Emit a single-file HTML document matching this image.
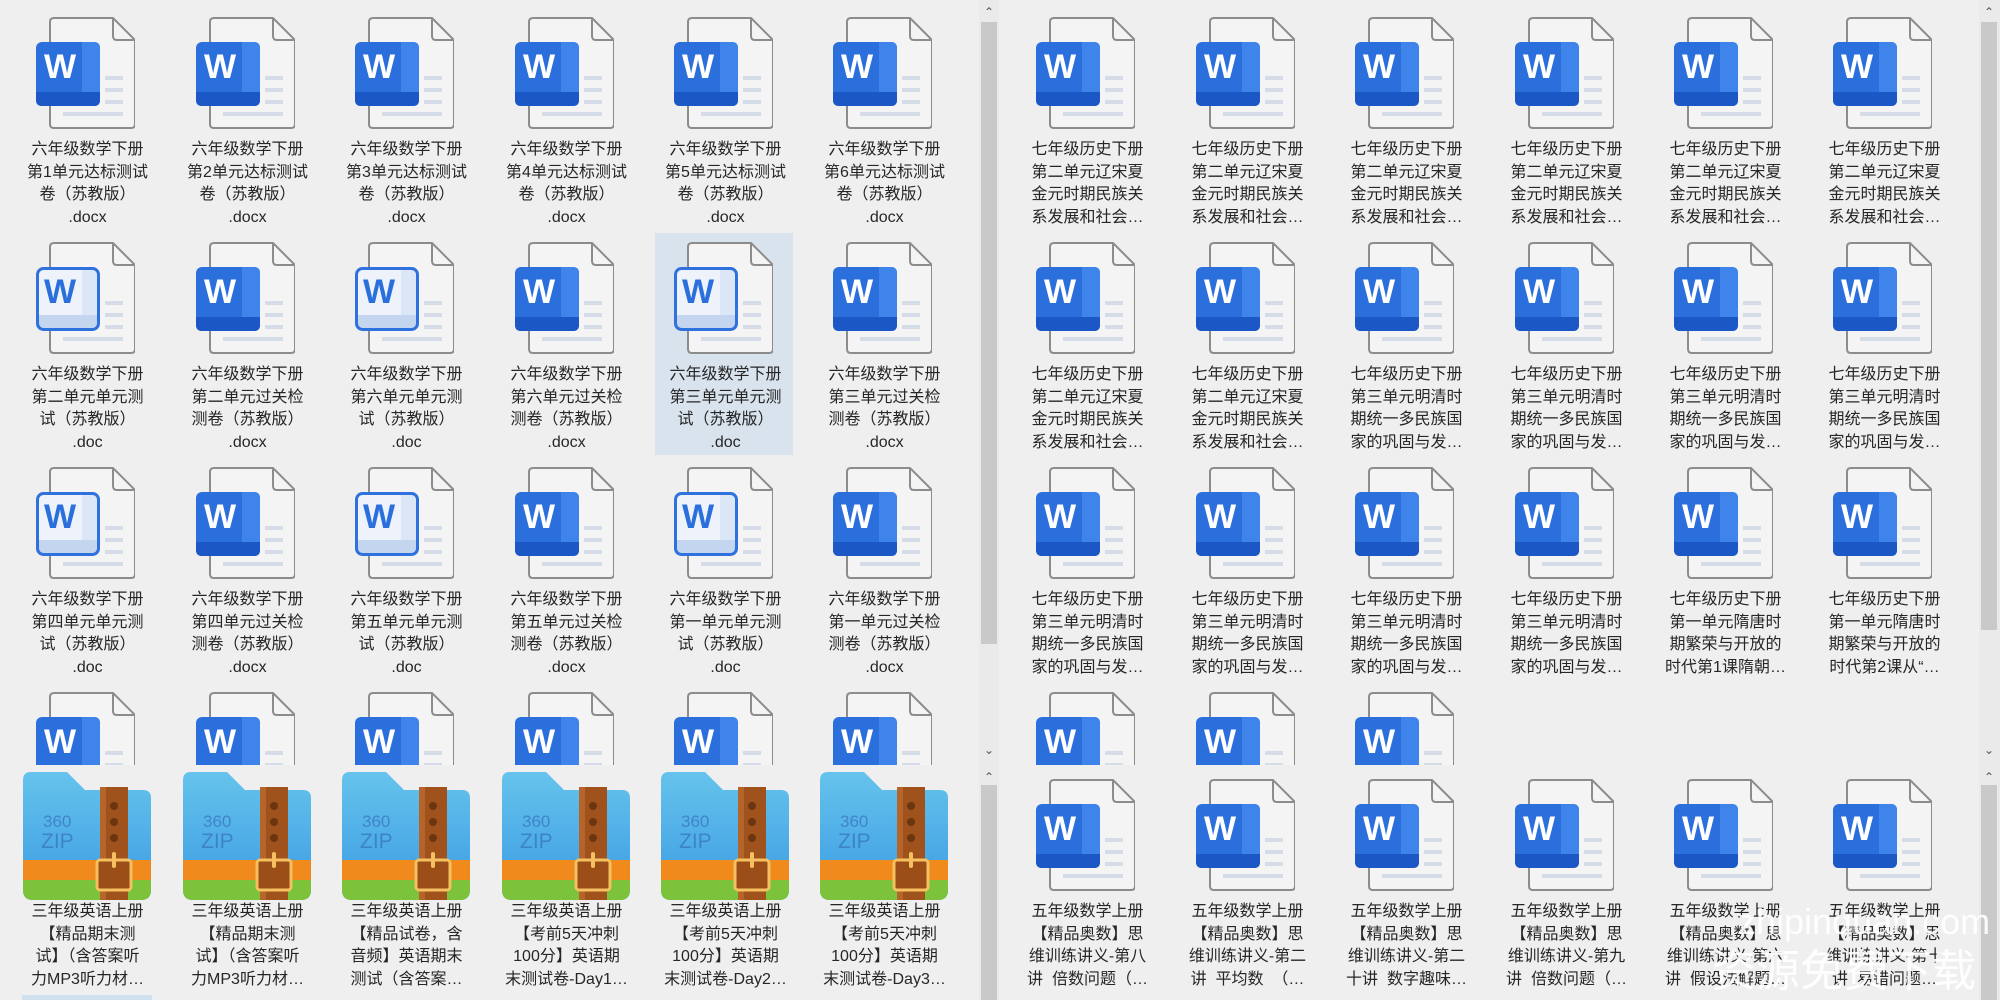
<!DOCTYPE html>
<html><head><meta charset="utf-8">
<style>
*{margin:0;padding:0;box-sizing:border-box}
body{width:2000px;height:1000px;background:#efefef;position:relative;overflow:hidden;font-family:"Liberation Sans","Noto Sans CJK SC",sans-serif}
.pane{position:absolute;overflow:hidden;background:#efefef}
.it{position:absolute;width:159px;height:225px}
.it svg{position:absolute;left:27px;top:0}
.t{position:absolute;left:10px;width:139px;top:139px;text-align:center;font-size:16px;line-height:22.5px;color:#262626;white-space:nowrap}
.sel{position:absolute;left:9px;top:8px;width:138px;height:222px;background:#d8e3ee}
.sb{position:absolute;width:20px;background:#eaeaea}
.th{position:absolute;left:2px;width:16px;background:#c9c9c9}
.ch{position:absolute;left:0;width:20px;text-align:center;font-size:12px;color:#555;line-height:12px}
.wm{position:absolute;color:rgba(255,255,255,.9);font-family:"Liberation Sans","Noto Sans CJK SC",sans-serif;white-space:nowrap}
</style></head><body>
<svg width="0" height="0" style="position:absolute">
<defs>
<linearGradient id="bg" x1="0" y1="0" x2="0" y2="1"><stop offset="0" stop-color="#66c3ec"/><stop offset="1" stop-color="#3a9be2"/></linearGradient>
<symbol id="wd" viewBox="0 0 100 130">
<path d="M15,22q0,-4 4,-4H78L100,40V124q0,4 -4,4H19q-4,0 -4,-4Z" fill="#f4f4f4" stroke="#8c8c8c" stroke-width="2"/>
<path d="M78,18V36q0,4 4,4H100" fill="none" stroke="#8c8c8c" stroke-width="2"/>
<g stroke="#d5dce7" stroke-width="4"><path d="M70,78H88M70,90H88M70,102H88M28,114H88"/></g>
<rect x="1" y="42" width="64" height="64" rx="6" fill="#2b6fdc"/>
<path d="M47,42H59q6,0 6,6V100q0,6 -6,6H47Z" fill="#3e84ea"/>
<path d="M1,92H65V100q0,6 -6,6H7q-6,0 -6,-6Z" fill="#1b58c6"/>
<text x="25" y="78" font-family="Liberation Sans" font-weight="bold" font-size="34" fill="#fff" text-anchor="middle">W</text>
</symbol>
<symbol id="wl" viewBox="0 0 100 130">
<path d="M15,22q0,-4 4,-4H78L100,40V124q0,4 -4,4H19q-4,0 -4,-4Z" fill="#f4f4f4" stroke="#8c8c8c" stroke-width="2"/>
<path d="M78,18V36q0,4 4,4H100" fill="none" stroke="#8c8c8c" stroke-width="2"/>
<g stroke="#d5dce7" stroke-width="4"><path d="M70,78H88M70,90H88M70,102H88M28,114H88"/></g>
<rect x="2.5" y="43.5" width="61" height="61" rx="6" fill="#eef3fb"/>
<path d="M47,44H58q5,0 5,5V99q0,5 -5,5H47Z" fill="#dbe6f6"/>
<path d="M3,90H63V99q0,5 -5,5H8q-5,0 -5,-5Z" fill="#c3d5ef"/>
<rect x="2.5" y="43.5" width="61" height="61" rx="6" fill="none" stroke="#2f72dd" stroke-width="3"/>
<text x="25" y="78" font-family="Liberation Sans" font-weight="bold" font-size="34" fill="#2b6fdc" text-anchor="middle">W</text>
</symbol>
<symbol id="zp" viewBox="0 0 130 140">
<path d="M0,18q0,-8 8,-8H44L62,28H120q8,0 8,8V128q0,10 -10,10H10q-10,0 -10,-10Z" fill="url(#bg)"/>
<path d="M0,98H128V118H0Z" fill="#f08a1c"/>
<path d="M0,118H128V128q0,10 -10,10H10q-10,0 -10,-10Z" fill="#7cc23a"/>
<rect x="77" y="25" width="28" height="113" fill="#a0521c"/>
<rect x="77" y="25" width="6" height="113" fill="#b5652a"/>
<circle cx="91" cy="44" r="4" fill="#6b3510"/><circle cx="91" cy="60" r="4" fill="#6b3510"/><circle cx="91" cy="76" r="4" fill="#6b3510"/>
<rect x="74" y="98" width="34" height="30" rx="3" fill="#9b4e18" stroke="#f5c060" stroke-width="3"/>
<rect x="89" y="90" width="4" height="16" rx="2" fill="#f5c060"/>
<text x="20" y="65" font-family="Liberation Sans" font-size="17" fill="#3a7ac0" opacity=".8">360</text>
<text x="18" y="86" font-family="Liberation Sans" font-size="21" fill="#3a7ac0" opacity=".8">ZIP</text>
</symbol>
</defs></svg>

<!-- LEFT UPPER -->
<div class="pane" style="left:0;top:0;width:979px;height:765px">
<div class="it" style="left:8px;top:0"><svg width="100" height="130"><use href="#wd"/></svg><div class="t">六年级数学下册<br>第1单元达标测试<br>卷（苏教版）<br>.docx</div></div>
<div class="it" style="left:168px;top:0"><svg width="100" height="130"><use href="#wd"/></svg><div class="t">六年级数学下册<br>第2单元达标测试<br>卷（苏教版）<br>.docx</div></div>
<div class="it" style="left:327px;top:0"><svg width="100" height="130"><use href="#wd"/></svg><div class="t">六年级数学下册<br>第3单元达标测试<br>卷（苏教版）<br>.docx</div></div>
<div class="it" style="left:487px;top:0"><svg width="100" height="130"><use href="#wd"/></svg><div class="t">六年级数学下册<br>第4单元达标测试<br>卷（苏教版）<br>.docx</div></div>
<div class="it" style="left:646px;top:0"><svg width="100" height="130"><use href="#wd"/></svg><div class="t">六年级数学下册<br>第5单元达标测试<br>卷（苏教版）<br>.docx</div></div>
<div class="it" style="left:805px;top:0"><svg width="100" height="130"><use href="#wd"/></svg><div class="t">六年级数学下册<br>第6单元达标测试<br>卷（苏教版）<br>.docx</div></div>

<div class="it" style="left:8px;top:225px"><svg width="100" height="130"><use href="#wl"/></svg><div class="t">六年级数学下册<br>第二单元单元测<br>试（苏教版）<br>.doc</div></div>
<div class="it" style="left:168px;top:225px"><svg width="100" height="130"><use href="#wd"/></svg><div class="t">六年级数学下册<br>第二单元过关检<br>测卷（苏教版）<br>.docx</div></div>
<div class="it" style="left:327px;top:225px"><svg width="100" height="130"><use href="#wl"/></svg><div class="t">六年级数学下册<br>第六单元单元测<br>试（苏教版）<br>.doc</div></div>
<div class="it" style="left:487px;top:225px"><svg width="100" height="130"><use href="#wd"/></svg><div class="t">六年级数学下册<br>第六单元过关检<br>测卷（苏教版）<br>.docx</div></div>
<div class="it" style="left:646px;top:225px"><div class="sel"></div><svg width="100" height="130"><use href="#wl"/></svg><div class="t">六年级数学下册<br>第三单元单元测<br>试（苏教版）<br>.doc</div></div>
<div class="it" style="left:805px;top:225px"><svg width="100" height="130"><use href="#wd"/></svg><div class="t">六年级数学下册<br>第三单元过关检<br>测卷（苏教版）<br>.docx</div></div>

<div class="it" style="left:8px;top:450px"><svg width="100" height="130"><use href="#wl"/></svg><div class="t">六年级数学下册<br>第四单元单元测<br>试（苏教版）<br>.doc</div></div>
<div class="it" style="left:168px;top:450px"><svg width="100" height="130"><use href="#wd"/></svg><div class="t">六年级数学下册<br>第四单元过关检<br>测卷（苏教版）<br>.docx</div></div>
<div class="it" style="left:327px;top:450px"><svg width="100" height="130"><use href="#wl"/></svg><div class="t">六年级数学下册<br>第五单元单元测<br>试（苏教版）<br>.doc</div></div>
<div class="it" style="left:487px;top:450px"><svg width="100" height="130"><use href="#wd"/></svg><div class="t">六年级数学下册<br>第五单元过关检<br>测卷（苏教版）<br>.docx</div></div>
<div class="it" style="left:646px;top:450px"><svg width="100" height="130"><use href="#wl"/></svg><div class="t">六年级数学下册<br>第一单元单元测<br>试（苏教版）<br>.doc</div></div>
<div class="it" style="left:805px;top:450px"><svg width="100" height="130"><use href="#wd"/></svg><div class="t">六年级数学下册<br>第一单元过关检<br>测卷（苏教版）<br>.docx</div></div>

<div class="it" style="left:8px;top:675px"><svg width="100" height="130"><use href="#wd"/></svg></div>
<div class="it" style="left:168px;top:675px"><svg width="100" height="130"><use href="#wd"/></svg></div>
<div class="it" style="left:327px;top:675px"><svg width="100" height="130"><use href="#wd"/></svg></div>
<div class="it" style="left:487px;top:675px"><svg width="100" height="130"><use href="#wd"/></svg></div>
<div class="it" style="left:646px;top:675px"><svg width="100" height="130"><use href="#wd"/></svg></div>
<div class="it" style="left:805px;top:675px"><svg width="100" height="130"><use href="#wd"/></svg></div>
</div>

<!-- LEFT LOWER -->
<div class="pane" style="left:0;top:765px;width:979px;height:235px">
<div class="it" style="left:8px;top:-3px"><svg width="130" height="140" style="left:15px;top:0"><use href="#zp"/></svg><div class="t">三年级英语上册<br>【精品期末测<br>试】（含答案听<br>力MP3听力材…</div></div>
<div class="it" style="left:168px;top:-3px"><svg width="130" height="140" style="left:15px;top:0"><use href="#zp"/></svg><div class="t">三年级英语上册<br>【精品期末测<br>试】（含答案听<br>力MP3听力材…</div></div>
<div class="it" style="left:327px;top:-3px"><svg width="130" height="140" style="left:15px;top:0"><use href="#zp"/></svg><div class="t">三年级英语上册<br>【精品试卷，含<br>音频】英语期末<br>测试（含答案…</div></div>
<div class="it" style="left:487px;top:-3px"><svg width="130" height="140" style="left:15px;top:0"><use href="#zp"/></svg><div class="t">三年级英语上册<br>【考前5天冲刺<br>100分】英语期<br>末测试卷-Day1…</div></div>
<div class="it" style="left:646px;top:-3px"><svg width="130" height="140" style="left:15px;top:0"><use href="#zp"/></svg><div class="t">三年级英语上册<br>【考前5天冲刺<br>100分】英语期<br>末测试卷-Day2…</div></div>
<div class="it" style="left:805px;top:-3px"><svg width="130" height="140" style="left:15px;top:0"><use href="#zp"/></svg><div class="t">三年级英语上册<br>【考前5天冲刺<br>100分】英语期<br>末测试卷-Day3…</div></div>
<div style="position:absolute;left:22px;top:230px;width:130px;height:10px;background:#cfe0ef"></div>
</div>

<!-- LEFT SCROLLBARS -->
<div class="sb" style="left:979px;top:0;height:765px"><div class="ch" style="top:6px">&#8963;</div><div class="th" style="top:22px;height:622px"></div><div class="ch" style="top:744px">&#8964;</div></div>
<div class="sb" style="left:979px;top:765px;height:235px"><div class="ch" style="top:6px">&#8963;</div><div class="th" style="top:20px;height:215px"></div></div>

<!-- RIGHT UPPER -->
<div class="pane" style="left:1000px;top:0;width:979px;height:765px">
<div class="it" style="left:8px;top:0"><svg width="100" height="130"><use href="#wd"/></svg><div class="t">七年级历史下册<br>第二单元辽宋夏<br>金元时期民族关<br>系发展和社会…</div></div>
<div class="it" style="left:168px;top:0"><svg width="100" height="130"><use href="#wd"/></svg><div class="t">七年级历史下册<br>第二单元辽宋夏<br>金元时期民族关<br>系发展和社会…</div></div>
<div class="it" style="left:327px;top:0"><svg width="100" height="130"><use href="#wd"/></svg><div class="t">七年级历史下册<br>第二单元辽宋夏<br>金元时期民族关<br>系发展和社会…</div></div>
<div class="it" style="left:487px;top:0"><svg width="100" height="130"><use href="#wd"/></svg><div class="t">七年级历史下册<br>第二单元辽宋夏<br>金元时期民族关<br>系发展和社会…</div></div>
<div class="it" style="left:646px;top:0"><svg width="100" height="130"><use href="#wd"/></svg><div class="t">七年级历史下册<br>第二单元辽宋夏<br>金元时期民族关<br>系发展和社会…</div></div>
<div class="it" style="left:805px;top:0"><svg width="100" height="130"><use href="#wd"/></svg><div class="t">七年级历史下册<br>第二单元辽宋夏<br>金元时期民族关<br>系发展和社会…</div></div>

<div class="it" style="left:8px;top:225px"><svg width="100" height="130"><use href="#wd"/></svg><div class="t">七年级历史下册<br>第二单元辽宋夏<br>金元时期民族关<br>系发展和社会…</div></div>
<div class="it" style="left:168px;top:225px"><svg width="100" height="130"><use href="#wd"/></svg><div class="t">七年级历史下册<br>第二单元辽宋夏<br>金元时期民族关<br>系发展和社会…</div></div>
<div class="it" style="left:327px;top:225px"><svg width="100" height="130"><use href="#wd"/></svg><div class="t">七年级历史下册<br>第三单元明清时<br>期统一多民族国<br>家的巩固与发…</div></div>
<div class="it" style="left:487px;top:225px"><svg width="100" height="130"><use href="#wd"/></svg><div class="t">七年级历史下册<br>第三单元明清时<br>期统一多民族国<br>家的巩固与发…</div></div>
<div class="it" style="left:646px;top:225px"><svg width="100" height="130"><use href="#wd"/></svg><div class="t">七年级历史下册<br>第三单元明清时<br>期统一多民族国<br>家的巩固与发…</div></div>
<div class="it" style="left:805px;top:225px"><svg width="100" height="130"><use href="#wd"/></svg><div class="t">七年级历史下册<br>第三单元明清时<br>期统一多民族国<br>家的巩固与发…</div></div>

<div class="it" style="left:8px;top:450px"><svg width="100" height="130"><use href="#wd"/></svg><div class="t">七年级历史下册<br>第三单元明清时<br>期统一多民族国<br>家的巩固与发…</div></div>
<div class="it" style="left:168px;top:450px"><svg width="100" height="130"><use href="#wd"/></svg><div class="t">七年级历史下册<br>第三单元明清时<br>期统一多民族国<br>家的巩固与发…</div></div>
<div class="it" style="left:327px;top:450px"><svg width="100" height="130"><use href="#wd"/></svg><div class="t">七年级历史下册<br>第三单元明清时<br>期统一多民族国<br>家的巩固与发…</div></div>
<div class="it" style="left:487px;top:450px"><svg width="100" height="130"><use href="#wd"/></svg><div class="t">七年级历史下册<br>第三单元明清时<br>期统一多民族国<br>家的巩固与发…</div></div>
<div class="it" style="left:646px;top:450px"><svg width="100" height="130"><use href="#wd"/></svg><div class="t">七年级历史下册<br>第一单元隋唐时<br>期繁荣与开放的<br>时代第1课隋朝…</div></div>
<div class="it" style="left:805px;top:450px"><svg width="100" height="130"><use href="#wd"/></svg><div class="t">七年级历史下册<br>第一单元隋唐时<br>期繁荣与开放的<br>时代第2课从“…</div></div>

<div class="it" style="left:8px;top:675px"><svg width="100" height="130"><use href="#wd"/></svg></div>
<div class="it" style="left:168px;top:675px"><svg width="100" height="130"><use href="#wd"/></svg></div>
<div class="it" style="left:327px;top:675px"><svg width="100" height="130"><use href="#wd"/></svg></div>
</div>

<!-- RIGHT LOWER -->
<div class="pane" style="left:1000px;top:765px;width:979px;height:235px">
<div class="it" style="left:8px;top:-3px"><svg width="100" height="130"><use href="#wd"/></svg><div class="t">五年级数学上册<br>【精品奥数】思<br>维训练讲义-第八<br>讲&nbsp; 倍数问题（…</div></div>
<div class="it" style="left:168px;top:-3px"><svg width="100" height="130"><use href="#wd"/></svg><div class="t">五年级数学上册<br>【精品奥数】思<br>维训练讲义-第二<br>讲&nbsp; 平均数 &nbsp;（…</div></div>
<div class="it" style="left:327px;top:-3px"><svg width="100" height="130"><use href="#wd"/></svg><div class="t">五年级数学上册<br>【精品奥数】思<br>维训练讲义-第二<br>十讲&nbsp; 数字趣味…</div></div>
<div class="it" style="left:487px;top:-3px"><svg width="100" height="130"><use href="#wd"/></svg><div class="t">五年级数学上册<br>【精品奥数】思<br>维训练讲义-第九<br>讲&nbsp; 倍数问题（…</div></div>
<div class="it" style="left:646px;top:-3px"><svg width="100" height="130"><use href="#wd"/></svg><div class="t">五年级数学上册<br>【精品奥数】思<br>维训练讲义-第六<br>讲&nbsp; 假设法解题…</div></div>
<div class="it" style="left:805px;top:-3px"><svg width="100" height="130"><use href="#wd"/></svg><div class="t">五年级数学上册<br>【精品奥数】思<br>维训练讲义-第十<br>讲&nbsp; 易错问题…</div></div>
</div>

<!-- RIGHT SCROLLBARS -->
<div class="sb" style="left:1979px;top:0;height:765px;width:21px"><div class="ch" style="top:6px">&#8963;</div><div class="th" style="top:22px;height:608px"></div><div class="ch" style="top:744px">&#8964;</div></div>
<div class="sb" style="left:1979px;top:765px;height:235px;width:21px"><div class="ch" style="top:6px">&#8963;</div><div class="th" style="top:20px;height:215px"></div></div>

<!-- watermark -->
<div class="wm" style="left:1738px;top:902px;font-size:36px;line-height:40px">zhipinquan.com</div>
<div class="wm" style="left:1712px;top:948px;font-size:44px;line-height:48px">资源免费下载</div>
</body></html>
